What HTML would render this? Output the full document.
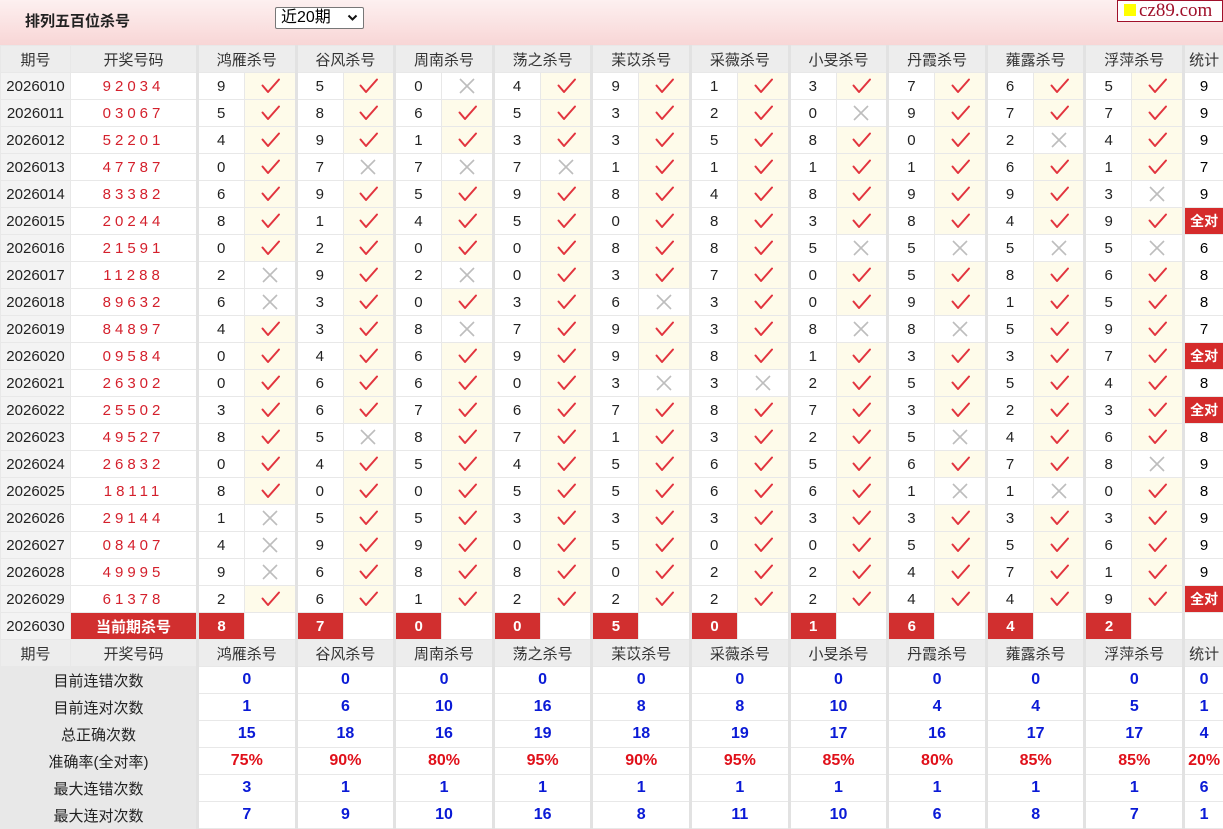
<!DOCTYPE html>
<html><head><meta charset="utf-8"><style>
body{margin:0;width:1223px;height:828px;overflow:hidden;background:#fff;font-family:"Liberation Sans","Noto Sans CJK SC",sans-serif;}
.top{position:absolute;left:0;top:0;width:1223px;height:45px;background:linear-gradient(#fdf0f0,#f8d6d6);}
.ttl{position:absolute;left:25px;top:10px;font-size:15px;font-weight:bold;color:#222;}
.sel{position:absolute;left:275px;top:7px;border:1px solid #777;border-radius:2px;background:#fff;font-size:16px;line-height:20px;padding-left:5px;box-sizing:border-box;width:89px;height:22px;}
.sel svg{position:absolute;right:5px;top:6px;width:11px;height:8px;}
.logo{position:absolute;left:1117px;top:0;width:104px;height:20px;border:1px solid #a0102a;background:#fff;font-family:"Liberation Serif",serif;font-size:19px;color:#a0102a;line-height:19px;}
.logo i{display:inline-block;width:12px;height:12px;background:#ff0;margin:0 3px 0 6px;}
table{position:absolute;left:0;top:45px;border-collapse:collapse;table-layout:fixed;width:1223px;font-size:15px;}
td{height:26px;border:1px solid #e8e8e8;padding:0;white-space:nowrap;overflow:hidden;}
tr{height:26.9px;}
col.g{border-left:3px solid #e2e2e2;}
.h td{background:#ededed;text-align:center;color:#333;}
.p{background:#f3f3f3;text-align:center;color:#222;}
.d{text-align:center;color:#d4202c;letter-spacing:4px;}
td.n{padding-left:18px;color:#222;}
td.y{background:#fefbea;text-align:center;}
td.x{text-align:center;}
td svg{width:22px;height:18px;vertical-align:middle;}
.s{text-align:center;}
.fa{background:#d52b2b;color:#fff;font-weight:bold;text-align:center;font-size:14px;}
.cur td.r{background:#d12f2f;color:#fff;font-weight:bold;text-align:center;}
.st td{text-align:center;color:#0a1ad6;font-weight:bold;font-size:16px;}
.st.rd td{color:#e0101a;}
.st td.l{background:#e8e8e8;color:#222;font-weight:normal;font-size:15px;}
</style></head><body>
<svg style="display:none"><defs>
<symbol id="k" viewBox="0 0 22 18"><path d="M3.5 8.5 L9 15 L20 2.5" fill="none" stroke="#e2343e" stroke-width="2" stroke-linecap="round" stroke-linejoin="round"/></symbol>
<symbol id="z" viewBox="0 0 22 18"><path d="M4 2 L18 16 M18 2 L4 16" fill="none" stroke="#bdbdbd" stroke-width="1.6"/></symbol>
</defs></svg>
<div class="top"><div class="ttl">排列五百位杀号</div><div class="sel">近20期<svg viewBox="0 0 11 8"><path d="M1.5 1.5 L5.5 5.5 L9.5 1.5" fill="none" stroke="#111" stroke-width="2"/></svg></div><div class="logo"><i></i>cz89.com</div></div>
<table>
<colgroup><col style="width:70px"><col style="width:127px">
<col class="g" style="width:47px"><col style="width:51.6px"><col class="g" style="width:47px"><col style="width:51.6px"><col class="g" style="width:47px"><col style="width:51.6px"><col class="g" style="width:47px"><col style="width:51.6px"><col class="g" style="width:47px"><col style="width:51.6px"><col class="g" style="width:47px"><col style="width:51.6px"><col class="g" style="width:47px"><col style="width:51.6px"><col class="g" style="width:47px"><col style="width:51.6px"><col class="g" style="width:47px"><col style="width:51.6px"><col class="g" style="width:47px"><col style="width:51.6px"><col class="g" style="width:40px"></colgroup>
<tr class="h"><td>期号</td><td>开奖号码</td><td colspan="2">鸿雁杀号</td><td colspan="2">谷风杀号</td><td colspan="2">周南杀号</td><td colspan="2">荡之杀号</td><td colspan="2">苿苡杀号</td><td colspan="2">采薇杀号</td><td colspan="2">小旻杀号</td><td colspan="2">丹霞杀号</td><td colspan="2">蕹露杀号</td><td colspan="2">浮萍杀号</td><td>统计</td></tr>
<tr><td class="p">2026010</td><td class="d">92034</td><td class="n">9</td><td class="y"><svg><use href="#k"/></svg></td><td class="n">5</td><td class="y"><svg><use href="#k"/></svg></td><td class="n">0</td><td class="x"><svg><use href="#z"/></svg></td><td class="n">4</td><td class="y"><svg><use href="#k"/></svg></td><td class="n">9</td><td class="y"><svg><use href="#k"/></svg></td><td class="n">1</td><td class="y"><svg><use href="#k"/></svg></td><td class="n">3</td><td class="y"><svg><use href="#k"/></svg></td><td class="n">7</td><td class="y"><svg><use href="#k"/></svg></td><td class="n">6</td><td class="y"><svg><use href="#k"/></svg></td><td class="n">5</td><td class="y"><svg><use href="#k"/></svg></td><td class="s">9</td></tr>
<tr><td class="p">2026011</td><td class="d">03067</td><td class="n">5</td><td class="y"><svg><use href="#k"/></svg></td><td class="n">8</td><td class="y"><svg><use href="#k"/></svg></td><td class="n">6</td><td class="y"><svg><use href="#k"/></svg></td><td class="n">5</td><td class="y"><svg><use href="#k"/></svg></td><td class="n">3</td><td class="y"><svg><use href="#k"/></svg></td><td class="n">2</td><td class="y"><svg><use href="#k"/></svg></td><td class="n">0</td><td class="x"><svg><use href="#z"/></svg></td><td class="n">9</td><td class="y"><svg><use href="#k"/></svg></td><td class="n">7</td><td class="y"><svg><use href="#k"/></svg></td><td class="n">7</td><td class="y"><svg><use href="#k"/></svg></td><td class="s">9</td></tr>
<tr><td class="p">2026012</td><td class="d">52201</td><td class="n">4</td><td class="y"><svg><use href="#k"/></svg></td><td class="n">9</td><td class="y"><svg><use href="#k"/></svg></td><td class="n">1</td><td class="y"><svg><use href="#k"/></svg></td><td class="n">3</td><td class="y"><svg><use href="#k"/></svg></td><td class="n">3</td><td class="y"><svg><use href="#k"/></svg></td><td class="n">5</td><td class="y"><svg><use href="#k"/></svg></td><td class="n">8</td><td class="y"><svg><use href="#k"/></svg></td><td class="n">0</td><td class="y"><svg><use href="#k"/></svg></td><td class="n">2</td><td class="x"><svg><use href="#z"/></svg></td><td class="n">4</td><td class="y"><svg><use href="#k"/></svg></td><td class="s">9</td></tr>
<tr><td class="p">2026013</td><td class="d">47787</td><td class="n">0</td><td class="y"><svg><use href="#k"/></svg></td><td class="n">7</td><td class="x"><svg><use href="#z"/></svg></td><td class="n">7</td><td class="x"><svg><use href="#z"/></svg></td><td class="n">7</td><td class="x"><svg><use href="#z"/></svg></td><td class="n">1</td><td class="y"><svg><use href="#k"/></svg></td><td class="n">1</td><td class="y"><svg><use href="#k"/></svg></td><td class="n">1</td><td class="y"><svg><use href="#k"/></svg></td><td class="n">1</td><td class="y"><svg><use href="#k"/></svg></td><td class="n">6</td><td class="y"><svg><use href="#k"/></svg></td><td class="n">1</td><td class="y"><svg><use href="#k"/></svg></td><td class="s">7</td></tr>
<tr><td class="p">2026014</td><td class="d">83382</td><td class="n">6</td><td class="y"><svg><use href="#k"/></svg></td><td class="n">9</td><td class="y"><svg><use href="#k"/></svg></td><td class="n">5</td><td class="y"><svg><use href="#k"/></svg></td><td class="n">9</td><td class="y"><svg><use href="#k"/></svg></td><td class="n">8</td><td class="y"><svg><use href="#k"/></svg></td><td class="n">4</td><td class="y"><svg><use href="#k"/></svg></td><td class="n">8</td><td class="y"><svg><use href="#k"/></svg></td><td class="n">9</td><td class="y"><svg><use href="#k"/></svg></td><td class="n">9</td><td class="y"><svg><use href="#k"/></svg></td><td class="n">3</td><td class="x"><svg><use href="#z"/></svg></td><td class="s">9</td></tr>
<tr><td class="p">2026015</td><td class="d">20244</td><td class="n">8</td><td class="y"><svg><use href="#k"/></svg></td><td class="n">1</td><td class="y"><svg><use href="#k"/></svg></td><td class="n">4</td><td class="y"><svg><use href="#k"/></svg></td><td class="n">5</td><td class="y"><svg><use href="#k"/></svg></td><td class="n">0</td><td class="y"><svg><use href="#k"/></svg></td><td class="n">8</td><td class="y"><svg><use href="#k"/></svg></td><td class="n">3</td><td class="y"><svg><use href="#k"/></svg></td><td class="n">8</td><td class="y"><svg><use href="#k"/></svg></td><td class="n">4</td><td class="y"><svg><use href="#k"/></svg></td><td class="n">9</td><td class="y"><svg><use href="#k"/></svg></td><td class="fa">全对</td></tr>
<tr><td class="p">2026016</td><td class="d">21591</td><td class="n">0</td><td class="y"><svg><use href="#k"/></svg></td><td class="n">2</td><td class="y"><svg><use href="#k"/></svg></td><td class="n">0</td><td class="y"><svg><use href="#k"/></svg></td><td class="n">0</td><td class="y"><svg><use href="#k"/></svg></td><td class="n">8</td><td class="y"><svg><use href="#k"/></svg></td><td class="n">8</td><td class="y"><svg><use href="#k"/></svg></td><td class="n">5</td><td class="x"><svg><use href="#z"/></svg></td><td class="n">5</td><td class="x"><svg><use href="#z"/></svg></td><td class="n">5</td><td class="x"><svg><use href="#z"/></svg></td><td class="n">5</td><td class="x"><svg><use href="#z"/></svg></td><td class="s">6</td></tr>
<tr><td class="p">2026017</td><td class="d">11288</td><td class="n">2</td><td class="x"><svg><use href="#z"/></svg></td><td class="n">9</td><td class="y"><svg><use href="#k"/></svg></td><td class="n">2</td><td class="x"><svg><use href="#z"/></svg></td><td class="n">0</td><td class="y"><svg><use href="#k"/></svg></td><td class="n">3</td><td class="y"><svg><use href="#k"/></svg></td><td class="n">7</td><td class="y"><svg><use href="#k"/></svg></td><td class="n">0</td><td class="y"><svg><use href="#k"/></svg></td><td class="n">5</td><td class="y"><svg><use href="#k"/></svg></td><td class="n">8</td><td class="y"><svg><use href="#k"/></svg></td><td class="n">6</td><td class="y"><svg><use href="#k"/></svg></td><td class="s">8</td></tr>
<tr><td class="p">2026018</td><td class="d">89632</td><td class="n">6</td><td class="x"><svg><use href="#z"/></svg></td><td class="n">3</td><td class="y"><svg><use href="#k"/></svg></td><td class="n">0</td><td class="y"><svg><use href="#k"/></svg></td><td class="n">3</td><td class="y"><svg><use href="#k"/></svg></td><td class="n">6</td><td class="x"><svg><use href="#z"/></svg></td><td class="n">3</td><td class="y"><svg><use href="#k"/></svg></td><td class="n">0</td><td class="y"><svg><use href="#k"/></svg></td><td class="n">9</td><td class="y"><svg><use href="#k"/></svg></td><td class="n">1</td><td class="y"><svg><use href="#k"/></svg></td><td class="n">5</td><td class="y"><svg><use href="#k"/></svg></td><td class="s">8</td></tr>
<tr><td class="p">2026019</td><td class="d">84897</td><td class="n">4</td><td class="y"><svg><use href="#k"/></svg></td><td class="n">3</td><td class="y"><svg><use href="#k"/></svg></td><td class="n">8</td><td class="x"><svg><use href="#z"/></svg></td><td class="n">7</td><td class="y"><svg><use href="#k"/></svg></td><td class="n">9</td><td class="y"><svg><use href="#k"/></svg></td><td class="n">3</td><td class="y"><svg><use href="#k"/></svg></td><td class="n">8</td><td class="x"><svg><use href="#z"/></svg></td><td class="n">8</td><td class="x"><svg><use href="#z"/></svg></td><td class="n">5</td><td class="y"><svg><use href="#k"/></svg></td><td class="n">9</td><td class="y"><svg><use href="#k"/></svg></td><td class="s">7</td></tr>
<tr><td class="p">2026020</td><td class="d">09584</td><td class="n">0</td><td class="y"><svg><use href="#k"/></svg></td><td class="n">4</td><td class="y"><svg><use href="#k"/></svg></td><td class="n">6</td><td class="y"><svg><use href="#k"/></svg></td><td class="n">9</td><td class="y"><svg><use href="#k"/></svg></td><td class="n">9</td><td class="y"><svg><use href="#k"/></svg></td><td class="n">8</td><td class="y"><svg><use href="#k"/></svg></td><td class="n">1</td><td class="y"><svg><use href="#k"/></svg></td><td class="n">3</td><td class="y"><svg><use href="#k"/></svg></td><td class="n">3</td><td class="y"><svg><use href="#k"/></svg></td><td class="n">7</td><td class="y"><svg><use href="#k"/></svg></td><td class="fa">全对</td></tr>
<tr><td class="p">2026021</td><td class="d">26302</td><td class="n">0</td><td class="y"><svg><use href="#k"/></svg></td><td class="n">6</td><td class="y"><svg><use href="#k"/></svg></td><td class="n">6</td><td class="y"><svg><use href="#k"/></svg></td><td class="n">0</td><td class="y"><svg><use href="#k"/></svg></td><td class="n">3</td><td class="x"><svg><use href="#z"/></svg></td><td class="n">3</td><td class="x"><svg><use href="#z"/></svg></td><td class="n">2</td><td class="y"><svg><use href="#k"/></svg></td><td class="n">5</td><td class="y"><svg><use href="#k"/></svg></td><td class="n">5</td><td class="y"><svg><use href="#k"/></svg></td><td class="n">4</td><td class="y"><svg><use href="#k"/></svg></td><td class="s">8</td></tr>
<tr><td class="p">2026022</td><td class="d">25502</td><td class="n">3</td><td class="y"><svg><use href="#k"/></svg></td><td class="n">6</td><td class="y"><svg><use href="#k"/></svg></td><td class="n">7</td><td class="y"><svg><use href="#k"/></svg></td><td class="n">6</td><td class="y"><svg><use href="#k"/></svg></td><td class="n">7</td><td class="y"><svg><use href="#k"/></svg></td><td class="n">8</td><td class="y"><svg><use href="#k"/></svg></td><td class="n">7</td><td class="y"><svg><use href="#k"/></svg></td><td class="n">3</td><td class="y"><svg><use href="#k"/></svg></td><td class="n">2</td><td class="y"><svg><use href="#k"/></svg></td><td class="n">3</td><td class="y"><svg><use href="#k"/></svg></td><td class="fa">全对</td></tr>
<tr><td class="p">2026023</td><td class="d">49527</td><td class="n">8</td><td class="y"><svg><use href="#k"/></svg></td><td class="n">5</td><td class="x"><svg><use href="#z"/></svg></td><td class="n">8</td><td class="y"><svg><use href="#k"/></svg></td><td class="n">7</td><td class="y"><svg><use href="#k"/></svg></td><td class="n">1</td><td class="y"><svg><use href="#k"/></svg></td><td class="n">3</td><td class="y"><svg><use href="#k"/></svg></td><td class="n">2</td><td class="y"><svg><use href="#k"/></svg></td><td class="n">5</td><td class="x"><svg><use href="#z"/></svg></td><td class="n">4</td><td class="y"><svg><use href="#k"/></svg></td><td class="n">6</td><td class="y"><svg><use href="#k"/></svg></td><td class="s">8</td></tr>
<tr><td class="p">2026024</td><td class="d">26832</td><td class="n">0</td><td class="y"><svg><use href="#k"/></svg></td><td class="n">4</td><td class="y"><svg><use href="#k"/></svg></td><td class="n">5</td><td class="y"><svg><use href="#k"/></svg></td><td class="n">4</td><td class="y"><svg><use href="#k"/></svg></td><td class="n">5</td><td class="y"><svg><use href="#k"/></svg></td><td class="n">6</td><td class="y"><svg><use href="#k"/></svg></td><td class="n">5</td><td class="y"><svg><use href="#k"/></svg></td><td class="n">6</td><td class="y"><svg><use href="#k"/></svg></td><td class="n">7</td><td class="y"><svg><use href="#k"/></svg></td><td class="n">8</td><td class="x"><svg><use href="#z"/></svg></td><td class="s">9</td></tr>
<tr><td class="p">2026025</td><td class="d">18111</td><td class="n">8</td><td class="y"><svg><use href="#k"/></svg></td><td class="n">0</td><td class="y"><svg><use href="#k"/></svg></td><td class="n">0</td><td class="y"><svg><use href="#k"/></svg></td><td class="n">5</td><td class="y"><svg><use href="#k"/></svg></td><td class="n">5</td><td class="y"><svg><use href="#k"/></svg></td><td class="n">6</td><td class="y"><svg><use href="#k"/></svg></td><td class="n">6</td><td class="y"><svg><use href="#k"/></svg></td><td class="n">1</td><td class="x"><svg><use href="#z"/></svg></td><td class="n">1</td><td class="x"><svg><use href="#z"/></svg></td><td class="n">0</td><td class="y"><svg><use href="#k"/></svg></td><td class="s">8</td></tr>
<tr><td class="p">2026026</td><td class="d">29144</td><td class="n">1</td><td class="x"><svg><use href="#z"/></svg></td><td class="n">5</td><td class="y"><svg><use href="#k"/></svg></td><td class="n">5</td><td class="y"><svg><use href="#k"/></svg></td><td class="n">3</td><td class="y"><svg><use href="#k"/></svg></td><td class="n">3</td><td class="y"><svg><use href="#k"/></svg></td><td class="n">3</td><td class="y"><svg><use href="#k"/></svg></td><td class="n">3</td><td class="y"><svg><use href="#k"/></svg></td><td class="n">3</td><td class="y"><svg><use href="#k"/></svg></td><td class="n">3</td><td class="y"><svg><use href="#k"/></svg></td><td class="n">3</td><td class="y"><svg><use href="#k"/></svg></td><td class="s">9</td></tr>
<tr><td class="p">2026027</td><td class="d">08407</td><td class="n">4</td><td class="x"><svg><use href="#z"/></svg></td><td class="n">9</td><td class="y"><svg><use href="#k"/></svg></td><td class="n">9</td><td class="y"><svg><use href="#k"/></svg></td><td class="n">0</td><td class="y"><svg><use href="#k"/></svg></td><td class="n">5</td><td class="y"><svg><use href="#k"/></svg></td><td class="n">0</td><td class="y"><svg><use href="#k"/></svg></td><td class="n">0</td><td class="y"><svg><use href="#k"/></svg></td><td class="n">5</td><td class="y"><svg><use href="#k"/></svg></td><td class="n">5</td><td class="y"><svg><use href="#k"/></svg></td><td class="n">6</td><td class="y"><svg><use href="#k"/></svg></td><td class="s">9</td></tr>
<tr><td class="p">2026028</td><td class="d">49995</td><td class="n">9</td><td class="x"><svg><use href="#z"/></svg></td><td class="n">6</td><td class="y"><svg><use href="#k"/></svg></td><td class="n">8</td><td class="y"><svg><use href="#k"/></svg></td><td class="n">8</td><td class="y"><svg><use href="#k"/></svg></td><td class="n">0</td><td class="y"><svg><use href="#k"/></svg></td><td class="n">2</td><td class="y"><svg><use href="#k"/></svg></td><td class="n">2</td><td class="y"><svg><use href="#k"/></svg></td><td class="n">4</td><td class="y"><svg><use href="#k"/></svg></td><td class="n">7</td><td class="y"><svg><use href="#k"/></svg></td><td class="n">1</td><td class="y"><svg><use href="#k"/></svg></td><td class="s">9</td></tr>
<tr><td class="p">2026029</td><td class="d">61378</td><td class="n">2</td><td class="y"><svg><use href="#k"/></svg></td><td class="n">6</td><td class="y"><svg><use href="#k"/></svg></td><td class="n">1</td><td class="y"><svg><use href="#k"/></svg></td><td class="n">2</td><td class="y"><svg><use href="#k"/></svg></td><td class="n">2</td><td class="y"><svg><use href="#k"/></svg></td><td class="n">2</td><td class="y"><svg><use href="#k"/></svg></td><td class="n">2</td><td class="y"><svg><use href="#k"/></svg></td><td class="n">4</td><td class="y"><svg><use href="#k"/></svg></td><td class="n">4</td><td class="y"><svg><use href="#k"/></svg></td><td class="n">9</td><td class="y"><svg><use href="#k"/></svg></td><td class="fa">全对</td></tr>
<tr class="cur"><td class="p">2026030</td><td class="r">当前期杀号</td><td class="r">8</td><td></td><td class="r">7</td><td></td><td class="r">0</td><td></td><td class="r">0</td><td></td><td class="r">5</td><td></td><td class="r">0</td><td></td><td class="r">1</td><td></td><td class="r">6</td><td></td><td class="r">4</td><td></td><td class="r">2</td><td></td><td></td></tr>
<tr class="h"><td>期号</td><td>开奖号码</td><td colspan="2">鸿雁杀号</td><td colspan="2">谷风杀号</td><td colspan="2">周南杀号</td><td colspan="2">荡之杀号</td><td colspan="2">苿苡杀号</td><td colspan="2">采薇杀号</td><td colspan="2">小旻杀号</td><td colspan="2">丹霞杀号</td><td colspan="2">蕹露杀号</td><td colspan="2">浮萍杀号</td><td>统计</td></tr>
<tr class="st"><td class="l" colspan="2">目前连错次数</td><td colspan="2">0</td><td colspan="2">0</td><td colspan="2">0</td><td colspan="2">0</td><td colspan="2">0</td><td colspan="2">0</td><td colspan="2">0</td><td colspan="2">0</td><td colspan="2">0</td><td colspan="2">0</td><td>0</td></tr>
<tr class="st"><td class="l" colspan="2">目前连对次数</td><td colspan="2">1</td><td colspan="2">6</td><td colspan="2">10</td><td colspan="2">16</td><td colspan="2">8</td><td colspan="2">8</td><td colspan="2">10</td><td colspan="2">4</td><td colspan="2">4</td><td colspan="2">5</td><td>1</td></tr>
<tr class="st"><td class="l" colspan="2">总正确次数</td><td colspan="2">15</td><td colspan="2">18</td><td colspan="2">16</td><td colspan="2">19</td><td colspan="2">18</td><td colspan="2">19</td><td colspan="2">17</td><td colspan="2">16</td><td colspan="2">17</td><td colspan="2">17</td><td>4</td></tr>
<tr class="st rd"><td class="l" colspan="2">准确率(全对率)</td><td colspan="2">75%</td><td colspan="2">90%</td><td colspan="2">80%</td><td colspan="2">95%</td><td colspan="2">90%</td><td colspan="2">95%</td><td colspan="2">85%</td><td colspan="2">80%</td><td colspan="2">85%</td><td colspan="2">85%</td><td>20%</td></tr>
<tr class="st"><td class="l" colspan="2">最大连错次数</td><td colspan="2">3</td><td colspan="2">1</td><td colspan="2">1</td><td colspan="2">1</td><td colspan="2">1</td><td colspan="2">1</td><td colspan="2">1</td><td colspan="2">1</td><td colspan="2">1</td><td colspan="2">1</td><td>6</td></tr>
<tr class="st"><td class="l" colspan="2">最大连对次数</td><td colspan="2">7</td><td colspan="2">9</td><td colspan="2">10</td><td colspan="2">16</td><td colspan="2">8</td><td colspan="2">11</td><td colspan="2">10</td><td colspan="2">6</td><td colspan="2">8</td><td colspan="2">7</td><td>1</td></tr>
</table>
</body></html>
